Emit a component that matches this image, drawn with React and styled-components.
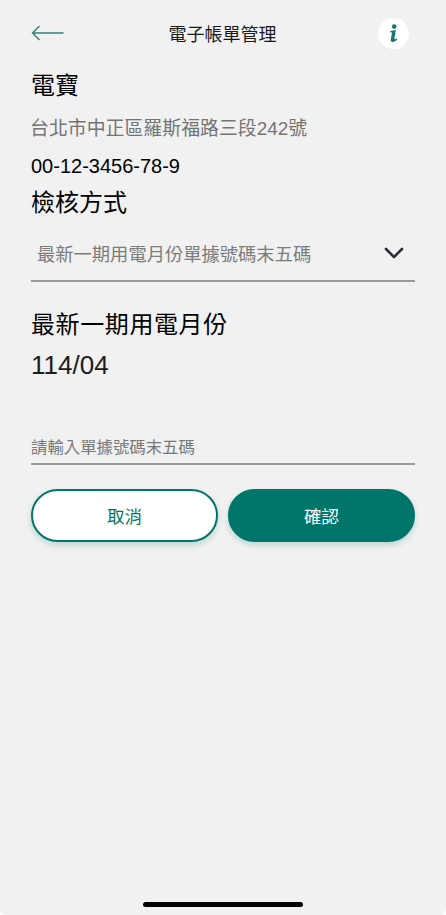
import styled, {createGlobalStyle} from 'styled-components';

const GlobalStyle = createGlobalStyle`
    html, body {
        margin: 0;
        padding: 0;
        background-color: #FFFFFF;
    }

    * {
        box-sizing: border-box;
    }
`;

export default function App() {
    return (
        <Page>
            <GlobalStyle/>
            <Header>
                <BackButton aria-label='返回'>
                    <svg width='33' height='16' viewBox='0 0 33 16' fill='none' stroke='#2F8377' strokeWidth='1.4'>
                        <path d='M1.5 8H32.5M8.5 1L1.5 8L8.5 15'/>
                    </svg>
                </BackButton>
                <Title>電子帳單管理</Title>
                <InfoButton aria-label='說明'>
                    <svg width='31' height='31' viewBox='0 0 31 31' fill='#17776C'>
                        <circle cx='16.2' cy='8.6' r='2.3'/>
                        <path d='M12.4 12.9L17.9 11.9L16.4 20.2C16.2 21.3 16.9 21.5 18.9 20.6L19.2 21.6C17.9 23.2 16.2 24 14.6 24C13.1 24 12.5 23 12.8 21.3L13.9 15.4C14 14.6 13.6 14.3 12.3 14.2Z'/>
                    </svg>
                </InfoButton>
            </Header>
            <Content>
                <Heading>電寶</Heading>
                <Address>台北市中正區羅斯福路三段242號</Address>
                <Account>00-12-3456-78-9</Account>
                <CheckHeading>檢核方式</CheckHeading>
                <Select>
                    <span>最新一期用電月份單據號碼末五碼</span>
                    <svg width='20' height='12' viewBox='0 0 20 12' fill='none' stroke='#2B2F36' strokeWidth='2.6' strokeLinecap='round' strokeLinejoin='round'>
                        <path d='M2 2L10 10L18 2'/>
                    </svg>
                </Select>
                <MonthHeading>最新一期用電月份</MonthHeading>
                <Month>114/04</Month>
                <Field>請輸入單據號碼末五碼</Field>
                <Actions>
                    <Button>取消</Button>
                    <Button primary>確認</Button>
                </Actions>
            </Content>
            <HomeBar/>
        </Page>
    );
}

const Page = styled.div`
    width: 446px;
    height: 915px;
    position: relative;
    overflow: hidden;
    border-radius: 0 0 6px 6px;
    background-color: #F1F1F1;
    font-family: "Noto Sans CJK TC", "Liberation Sans", sans-serif;
`;

const Header = styled.header`
    height: 66px;
    padding: 0 37px 0 31px;
    display: flex;
    align-items: center;
    justify-content: space-between;
`;

const BackButton = styled.div`
    width: 33px;
    height: 16px;
    display: flex;
`;

const Title = styled.h1`
    margin: 0 0 0 3px;
    font-size: 18px;
    font-weight: 400;
    line-height: 24px;
    color: #1A1A1A;
`;

const InfoButton = styled.div`
    width: 31px;
    height: 31px;
    border-radius: 50%;
    display: flex;
    background-color: #FFFFFF;
`;

const Content = styled.main`
    padding: 0 31px;
    display: flex;
    flex-direction: column;
`;

const Heading = styled.h2`
    margin: 2px 0 0;
    font-size: 24px;
    font-weight: 400;
    line-height: 32px;
    color: #000000;
`;

const Address = styled.p`
    margin: 16px 0 0 -1px;
    font-family: "Liberation Sans", "Noto Sans CJK TC", sans-serif;
    font-size: 18.9px;
    line-height: 26px;
    color: #747474;
`;

const Account = styled.p`
    margin: 11px 0 0;
    font-family: "Liberation Sans", sans-serif;
    font-size: 20px;
    line-height: 26px;
    color: #000000;
`;

const CheckHeading = styled(Heading)`
    margin-top: 6px;
`;

const Select = styled.div`
    height: 65px;
    padding: 8px 11px 0 6px;
    display: flex;
    align-items: center;
    justify-content: space-between;
    border-bottom: 2px solid #9A9A9A;
    font-size: 18.3px;
    color: #7C7C7C;
`;

const MonthHeading = styled(Heading)`
    margin-top: 25px;
    letter-spacing: 0.6px;
`;

const Month = styled.p`
    margin: 10px 0 0;
    font-family: "Liberation Sans", sans-serif;
    font-size: 26px;
    line-height: 32px;
    color: #1C1C1C;
`;

const Field = styled.div`
    margin-top: 46px;
    height: 38px;
    padding-top: 7px;
    border-bottom: 2px solid #9A9A9A;
    font-size: 16.4px;
    line-height: 24px;
    color: #787878;
`;

const Actions = styled.div`
    margin-top: 24px;
    display: grid;
    grid-template-columns: 187px 187px;
    gap: 10px;
`;

const Button = styled.button`
    height: 53px;
    border-radius: 27px;
    border: 2px solid #00756A;
    font-family: inherit;
    font-size: 17.5px;
    color: ${props => props.primary ? '#FFFFFF' : '#00756A'};
    background-color: ${props => props.primary ? '#00756A' : '#FFFFFF'};
    box-shadow: 0 3px 6px rgba(0, 117, 106, 0.22);
`;

const HomeBar = styled.div`
    position: absolute;
    left: 143px;
    bottom: 8px;
    width: 160px;
    height: 5px;
    border-radius: 3px;
    background-color: #000000;
`;
